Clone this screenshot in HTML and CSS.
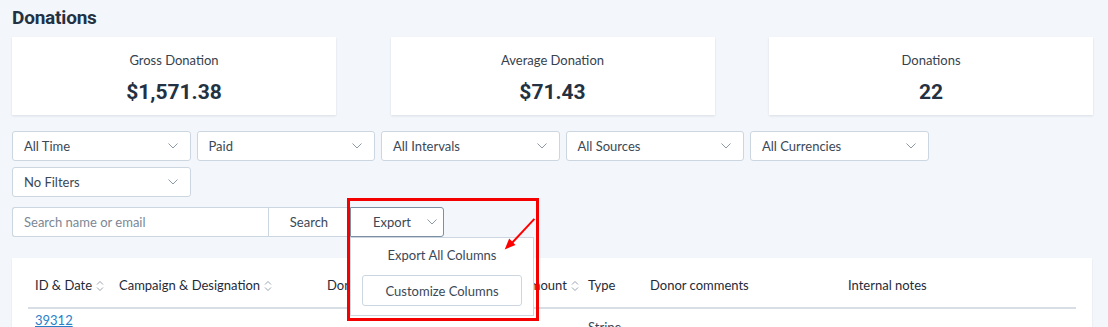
FILE: index.html
```html
<!DOCTYPE html>
<html>
<head>
<meta charset="utf-8">
<link rel="stylesheet" href="styles.css">
</head>
<body>
<h1 class="title">Donations</h1>
<div class="stats">
  <div class="stat"><div class="stat-label">Gross Donation</div><div class="stat-value">$1,571.38</div></div>
  <div class="stat"><div class="stat-label">Average Donation</div><div class="stat-value">$71.43</div></div>
  <div class="stat"><div class="stat-label">Donations</div><div class="stat-value">22</div></div>
</div>
<div class="filters">
  <div class="select">All Time<svg class="chev" viewBox="0 0 10 6"><path d="M0.5 0.5 L5 5 L9.5 0.5"/></svg></div>
  <div class="select">Paid<svg class="chev" viewBox="0 0 10 6"><path d="M0.5 0.5 L5 5 L9.5 0.5"/></svg></div>
  <div class="select">All Intervals<svg class="chev" viewBox="0 0 10 6"><path d="M0.5 0.5 L5 5 L9.5 0.5"/></svg></div>
  <div class="select">All Sources<svg class="chev" viewBox="0 0 10 6"><path d="M0.5 0.5 L5 5 L9.5 0.5"/></svg></div>
  <div class="select">All Currencies<svg class="chev" viewBox="0 0 10 6"><path d="M0.5 0.5 L5 5 L9.5 0.5"/></svg></div>
  <div class="select">No Filters<svg class="chev" viewBox="0 0 10 6"><path d="M0.5 0.5 L5 5 L9.5 0.5"/></svg></div>
</div>
<div class="search-row">
  <div class="search-input">Search name or email</div>
  <div class="search-btn">Search</div>
  <div class="export">
    <div class="export-btn">Export<svg class="chev" viewBox="0 0 10 6"><path d="M0.5 0.5 L5 5 L9.5 0.5"/></svg></div>
    <div class="export-menu">
      <div class="menu-item">Export All Columns</div>
      <div class="menu-btn">Customize Columns</div>
    </div>
    <div class="annot-box"></div>
    <svg class="annot-arrow" viewBox="0 0 40 40"><path d="M36 2 L10 30" stroke="#f00" stroke-width="2.2" fill="none"/><path d="M3 36 L8 24 L15 31 Z" fill="#f00"/></svg>
  </div>
</div>
<div class="table-card">
  <table class="tbl">
    <thead>
      <tr>
        <th class="c-id">ID &amp; Date<svg class="sort" viewBox="0 0 8 12"><path d="M1 4.5 L4 1.5 L7 4.5 M1 7.5 L4 10.5 L7 7.5"/></svg></th>
        <th class="c-camp">Campaign &amp; Designation<svg class="sort" viewBox="0 0 8 12"><path d="M1 4.5 L4 1.5 L7 4.5 M1 7.5 L4 10.5 L7 7.5"/></svg></th>
        <th class="c-donor">Donor</th>
        <th class="c-amt">Amount<svg class="sort" viewBox="0 0 8 12"><path d="M1 4.5 L4 1.5 L7 4.5 M1 7.5 L4 10.5 L7 7.5"/></svg></th>
        <th class="c-type">Type</th>
        <th class="c-comm">Donor comments</th>
        <th class="c-notes">Internal notes</th>
      </tr>
    </thead>
    <tbody>
      <tr>
        <td><a class="link" href="#">39312</a></td>
        <td></td>
        <td></td>
        <td></td>
        <td class="type-cell">Stripe</td>
        <td></td>
        <td></td>
      </tr>
    </tbody>
  </table>
</div>
</body>
</html>
```
FILE: styles.css
```css
* { box-sizing: border-box; }
html, body { margin: 0; }
body {
  background: #f3f6fa;
  font-family: "Lato", "Open Sans", sans-serif;
  color: #3b4856;
  padding: 6px 15px 0 12px;
  width: 1108px;
  height: 327px;
  overflow: hidden;
}
.title {
  margin: 0;
  font-family: "Roboto", sans-serif;
  font-weight: 700;
  font-size: 19px;
  line-height: 24px;
  color: #243142;
  letter-spacing: -0.2px;
}
.stats {
  display: flex;
  justify-content: space-between;
  width: 1081px;
  margin-top: 7px;
}
.stat {
  width: 324px;
  height: 78px;
  background: #fff;
  box-shadow: 0 1px 2px rgba(40, 70, 110, 0.12);
  text-align: center;
  padding-top: 15px;
}
.stat-label {
  font-size: 13px;
  line-height: 16px;
  color: #36424e;
}
.stat-value {
  margin-top: 12px;
  font-family: "Roboto", sans-serif;
  font-weight: 700;
  font-size: 21px;
  line-height: 24px;
  color: #243142;
}
.filters {
  display: flex;
  flex-wrap: wrap;
  gap: 6px;
  width: 1081px;
  margin-top: 16px;
}
.select {
  width: 178.5px;
  height: 30px;
  background: #fff;
  border: 1px solid #ccd6e0;
  border-radius: 3px;
  display: flex;
  align-items: center;
  justify-content: space-between;
  padding: 0 12px 0 11px;
  font-size: 13px;
  color: #3b4856;
}
.chev {
  width: 10px;
  height: 6px;
  fill: none;
  stroke: #8d99a6;
  stroke-width: 1;
}
.search-row {
  display: flex;
  margin-top: 10px;
  height: 30px;
}
.search-input {
  width: 256px;
  height: 30px;
  background: #fff;
  border: 1px solid #ccd6e0;
  border-right: none;
  border-radius: 3px 0 0 3px;
  display: flex;
  align-items: center;
  padding-left: 11px;
  font-size: 13px;
  color: #7b8794;
}
.search-btn {
  width: 81px;
  height: 30px;
  background: #fff;
  border: 1px solid #ccd6e0;
  border-right: none;
  border-radius: 0;
  display: flex;
  align-items: center;
  justify-content: center;
  font-size: 13px;
  color: #3b4856;
}
.export {
  position: relative;
  margin-left: 1px;
}
.export-btn {
  width: 94px;
  height: 30px;
  background: #fff;
  border: 1px solid #7d8fa3;
  border-radius: 0 3px 3px 0;
  display: flex;
  align-items: center;
  padding: 0 6px 0 22px;
  justify-content: space-between;
  font-size: 13px;
  color: #3b4856;
  position: relative;
  z-index: 3;
}
.export-menu {
  position: absolute;
  left: 0;
  top: 30px;
  width: 184px;
  height: 79px;
  background: #fff;
  border: 1px solid #ccd6e0;
  z-index: 4;
  padding: 9px 11px 0 11px;
  text-align: center;
}
.menu-item {
  font-size: 13px;
  line-height: 16px;
  color: #3b4856;
}
.menu-btn {
  margin-top: 12px;
  height: 31px;
  border: 1px solid #ccd6e0;
  border-radius: 3px;
  display: flex;
  align-items: center;
  justify-content: center;
  font-size: 13px;
  color: #3b4856;
}
.annot-box {
  position: absolute;
  left: -3px;
  top: -9px;
  width: 192px;
  height: 123px;
  border: 3px solid #f50000;
  z-index: 5;
}
.annot-arrow {
  position: absolute;
  left: 152px;
  top: 10px;
  width: 36px;
  height: 36px;
  z-index: 6;
}
.table-card {
  margin-top: 21px;
  width: 1080px;
  height: 120px;
  background: #fff;
  padding: 0 16px;
  box-shadow: 0 1px 2px rgba(40, 70, 110, 0.1);
}
.tbl {
  width: 1048px;
  border-collapse: collapse;
  table-layout: fixed;
}
.tbl th {
  text-align: left;
  font-weight: 400;
  font-size: 13px;
  color: #1f2b38;
  height: 50px;
  padding: 4px 0 0 7px;
  border-bottom: 2px solid #d8dee5;
  white-space: nowrap;
  vertical-align: middle;
}
.sort {
  width: 8px;
  height: 12px;
  margin-left: 4px;
  vertical-align: -2px;
  fill: none;
  stroke: #9aa5b1;
  stroke-width: 1;
}
.c-id { width: 84px; }
.c-camp { width: 208px; }
.c-donor { width: 194px; }
.c-amt { width: 67px; }
.c-type { width: 62px; }
.c-comm { width: 198px; }
.c-notes { width: 235px; }
.tbl td {
  padding: 3px 0 0 7px;
  font-size: 13px;
  vertical-align: top;
  height: 30px;
}
.link {
  color: #2a7fc9;
  text-decoration: underline;
}
.type-cell {
  padding-top: 10px !important;
}
```
